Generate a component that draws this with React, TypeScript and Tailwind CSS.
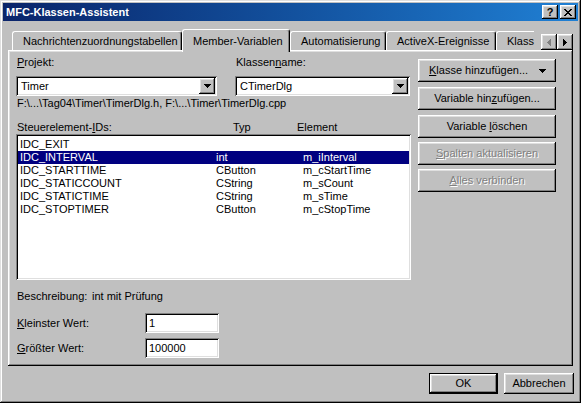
import React from "react";

// classic 3D bevels
const raised =
  "shadow-[inset_-1px_-1px_0_#000,inset_1px_1px_0_#fff,inset_-2px_-2px_0_#808080,inset_2px_2px_0_#dfdfdf]";
const sunken =
  "shadow-[inset_1px_1px_0_#808080,inset_-1px_-1px_0_#fff,inset_2px_2px_0_#000,inset_-2px_-2px_0_#dfdfdf]";
const defaultBtn =
  "shadow-[inset_0_0_0_1px_#000,inset_-2px_-2px_0_#000,inset_2px_2px_0_#fff,inset_-3px_-3px_0_#808080,inset_3px_3px_0_#dfdfdf]";
const disabledText = "text-[#808080] [text-shadow:1px_1px_0_#fff]";

function DownTri({ color = "#000" }: { color?: string }) {
  return (
    <svg width="7" height="4" viewBox="0 0 7 4" shapeRendering="crispEdges">
      <path d="M0 0h7v1H0zM1 1h5v1H1zM2 2h3v1H2zM3 3h1v1H3z" fill={color} />
    </svg>
  );
}

function Combo({ value, className }: { value: string; className: string }) {
  return (
    <div className={`h-[20px] bg-white p-[2px] flex items-center ${sunken} ${className}`}>
      <span className="flex-1 pl-[3px] leading-[16px]">{value}</span>
      <div className={`w-[16px] h-[16px] bg-[#c0c0c0] flex items-center justify-center ${raised}`}>
        <DownTri />
      </div>
    </div>
  );
}

function Tab({ label, selected, className }: { label: string; selected?: boolean; className: string }) {
  return (
    <div
      className={`flex items-center border-l border-t border-white rounded-t-[3px] border-r border-r-black shadow-[inset_-1px_0_0_#808080] bg-[#c0c0c0] pl-[10px] whitespace-nowrap ${
        selected ? "h-[23px] -mb-[2px] relative z-10" : "h-[19px]"
      } ${className}`}
    >
      {label}
    </div>
  );
}

function SideButton({ children, disabled, className = "" }: { children: React.ReactNode; disabled?: boolean; className?: string }) {
  return (
    <div
      className={`h-[23px] flex items-center justify-center ${raised} ${disabled ? disabledText : ""} ${className}`}
    >
      {children}
    </div>
  );
}

const rows = [
  { id: "IDC_EXIT", typ: "", el: "" },
  { id: "IDC_INTERVAL", typ: "int", el: "m_iInterval", sel: true },
  { id: "IDC_STARTTIME", typ: "CButton", el: "m_cStartTime" },
  { id: "IDC_STATICCOUNT", typ: "CString", el: "m_sCount" },
  { id: "IDC_STATICTIME", typ: "CString", el: "m_sTime" },
  { id: "IDC_STOPTIMER", typ: "CButton", el: "m_cStopTime" },
];

export default function App() {
  return (
    <div
      className={`w-[581px] h-[403px] bg-[#c0c0c0] p-[3px] flex flex-col text-[11px] leading-[13px] text-black font-['Liberation_Sans',Arial,sans-serif] shadow-[inset_-1px_-1px_0_#000,inset_1px_1px_0_#dfdfdf,inset_-2px_-2px_0_#808080,inset_2px_2px_0_#fff]`}
    >
      {/* Title bar */}
      <div className="h-[18px] flex items-center bg-gradient-to-r from-[#0a246a] to-[#2080d4] pl-[3px] pr-[2px]">
        <span className="flex-1 text-white font-bold text-[11px]">MFC-Klassen-Assistent</span>
        <div className={`w-[16px] h-[14px] bg-[#c0c0c0] flex items-center justify-center font-bold text-[11px] leading-[11px] ${raised}`}>
          ?
        </div>
        <div className={`ml-[2px] w-[16px] h-[14px] bg-[#c0c0c0] flex items-center justify-center ${raised}`}>
          <svg width="8" height="7" viewBox="0 0 8 7" shapeRendering="crispEdges">
            <path
              d="M0 0h2v1H0zM6 0h2v1H6zM1 1h2v1H1zM5 1h2v1H5zM2 2h4v1H2zM3 3h2v1H3zM2 4h4v1H2zM1 5h2v1H1zM5 5h2v1H5zM0 6h2v1H0zM6 6h2v1H6z"
              fill="#000"
            />
          </svg>
        </div>
      </div>

      {/* Tab strip */}
      <div className="h-[29px] flex items-end relative z-10">
        <Tab label="Nachrichtenzuordnungstabellen" className="ml-[9px] w-[170px]" />
        <Tab label="Member-Variablen" selected className="w-[108px]" />
        <Tab label="Automatisierung" className="w-[96px]" />
        <Tab label="ActiveX-Ereignisse" className="w-[110px]" />
        <div className="h-[19px] w-[38px] flex items-center border-l border-t border-white rounded-tl-[3px] pl-[10px] whitespace-nowrap">
          Klass
        </div>
        <div className="ml-[7px] flex">
          <div className={`w-[16px] h-[16px] flex items-center justify-center ${raised}`}>
            <svg width="4" height="7" viewBox="0 0 4 7" shapeRendering="crispEdges">
              <path d="M3 0h1v7H3zM2 1h1v5H2zM1 2h1v3H1zM0 3h1v1H0z" fill="#808080" />
            </svg>
          </div>
          <div className={`w-[16px] h-[16px] flex items-center justify-center ${raised}`}>
            <svg width="4" height="7" viewBox="0 0 4 7" shapeRendering="crispEdges">
              <path d="M0 0h1v7H0zM1 1h1v5H1zM2 2h1v3H2zM3 3h1v1H3z" fill="#000" />
            </svg>
          </div>
        </div>
      </div>

      {/* Tab panel */}
      <div className={`ml-[5px] w-[565px] h-[316px] pl-[8px] pt-[6px] flex ${raised}`}>
        <div className="w-[395px] flex flex-col">
          <div className="flex">
            <div className="w-[201px] flex flex-col">
              <span className="pl-[1px]">
                <u>P</u>rojekt:
              </span>
              <Combo value="Timer" className="mt-[7px] w-[201px]" />
            </div>
            <div className="ml-[18px] w-[175px] flex flex-col">
              <span className="pl-[1px]">
                Klassen<u>n</u>ame:
              </span>
              <Combo value="CTimerDlg" className="mt-[7px] w-[175px]" />
            </div>
          </div>
          <div className="mt-[1px] pl-[1px] whitespace-nowrap">
            F:\...\Tag04\Timer\TimerDlg.h, F:\...\Timer\TimerDlg.cpp
          </div>
          <div className="mt-[11px] flex pl-[1px]">
            <span className="w-[216px]">
              Steuerelement-<u>I</u>Ds:
            </span>
            <span className="w-[64px]">Typ</span>
            <span>Element</span>
          </div>
          <div className={`h-[146px] bg-white p-[2px] pt-[4px] ${sunken}`}>
            {rows.map((r) => (
              <div
                key={r.id}
                className={`h-[13px] flex items-center ${r.sel ? "bg-[#000080] text-white" : ""}`}
              >
                <span className="w-[198px] pl-[2px]">{r.id}</span>
                <span className="w-[87px]">{r.typ}</span>
                <span>{r.el}</span>
              </div>
            ))}
          </div>
          <div className="mt-[10px] flex pl-[1px]">
            <span className="w-[75px]">Beschreibung:</span>
            <span>int mit Prüfung</span>
          </div>
          <div className="mt-[10px] flex items-center">
            <span className="w-[129px] pl-[1px]">
              <u>K</u>leinster Wert:
            </span>
            <div className={`w-[74px] h-[20px] bg-white pl-[4px] flex items-center ${sunken}`}>1</div>
          </div>
          <div className="mt-[5px] flex items-center">
            <span className="w-[129px] pl-[1px]">
              <u>G</u>rößter Wert:
            </span>
            <div className={`w-[74px] h-[20px] bg-white pl-[4px] flex items-center ${sunken}`}>100000</div>
          </div>
        </div>

        <div className="ml-[7px] w-[138px] mt-[3px] flex flex-col">
          <div className={`h-[23px] flex items-center pl-[11px] pr-[10px] ${raised}`}>
            <span className="flex-1">
              <u>K</u>lasse hinzufügen...
            </span>
            <DownTri />
          </div>
          <SideButton className="mt-[5px]">
            <span>
              Variable hin<u>z</u>ufügen...
            </span>
          </SideButton>
          <SideButton className="mt-[5px]">
            <span>
              Variable <u>l</u>öschen
            </span>
          </SideButton>
          <SideButton disabled className="mt-[4px]">
            <span>
              <u>S</u>palten aktualisieren
            </span>
          </SideButton>
          <SideButton disabled className="mt-[4px]">
            <span>
              <u>A</u>lles verbinden
            </span>
          </SideButton>
        </div>
      </div>

      {/* Bottom buttons */}
      <div className="mt-[7px] flex justify-end pr-[4px]">
        <div className={`w-[69px] h-[21px] flex items-center justify-center ${defaultBtn}`}>OK</div>
        <div className={`ml-[6px] w-[70px] h-[21px] flex items-center justify-center ${raised}`}>Abbrechen</div>
      </div>
    </div>
  );
}
